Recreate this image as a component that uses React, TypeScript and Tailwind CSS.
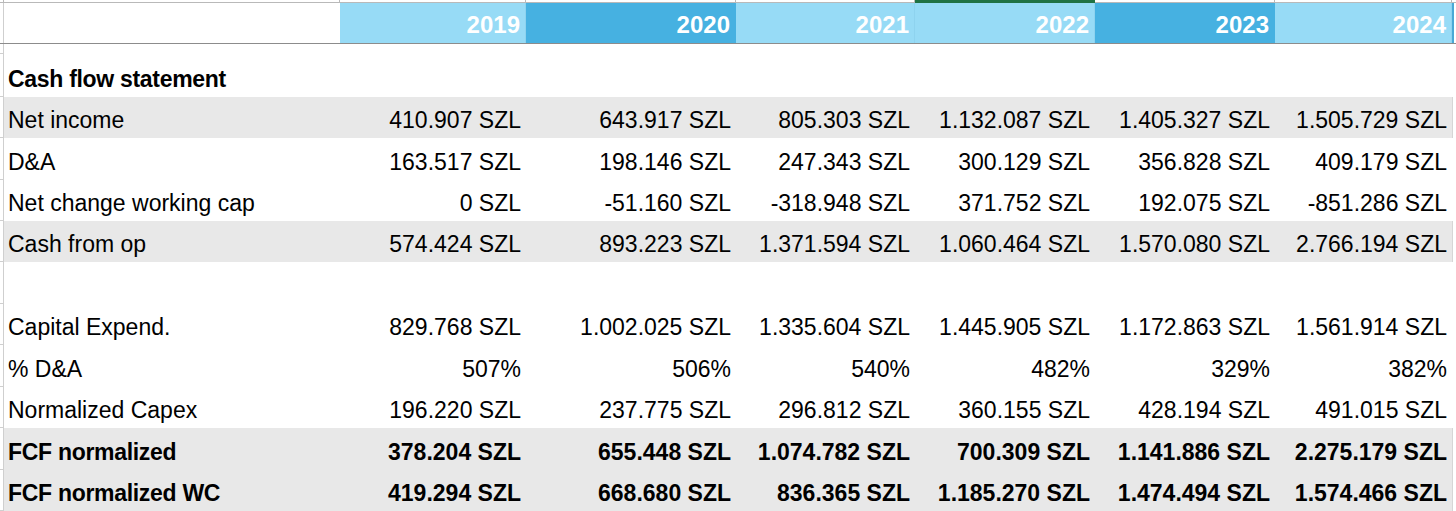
import * as React from "react";

// column widths (px) after the 4px left gutter: label, 2019..2024
const cols = [336, 186, 210, 179, 180, 180, 177];
const years = ["2019", "2020", "2021", "2022", "2023", "2024"];
const dark = [false, true, false, false, true, false];

type Row = {
  label: string;
  values?: string[];
  shade?: boolean;
  bold?: boolean;
  h: number;
};

const rows: Row[] = [
  { label: "Cash flow statement", bold: true, h: 43 },
  { label: "Net income", shade: true, h: 41, values: ["410.907 SZL", "643.917 SZL", "805.303 SZL", "1.132.087 SZL", "1.405.327 SZL", "1.505.729 SZL"] },
  { label: "D&A", h: 42, values: ["163.517 SZL", "198.146 SZL", "247.343 SZL", "300.129 SZL", "356.828 SZL", "409.179 SZL"] },
  { label: "Net change working cap", h: 41, values: ["0 SZL", "-51.160 SZL", "-318.948 SZL", "371.752 SZL", "192.075 SZL", "-851.286 SZL"] },
  { label: "Cash from op", shade: true, h: 41, values: ["574.424 SZL", "893.223 SZL", "1.371.594 SZL", "1.060.464 SZL", "1.570.080 SZL", "2.766.194 SZL"] },
  { label: "", h: 42 },
  { label: "Capital Expend.", h: 41, values: ["829.768 SZL", "1.002.025 SZL", "1.335.604 SZL", "1.445.905 SZL", "1.172.863 SZL", "1.561.914 SZL"] },
  { label: "% D&A", h: 42, values: ["507%", "506%", "540%", "482%", "329%", "382%"] },
  { label: "Normalized Capex", h: 41, values: ["196.220 SZL", "237.775 SZL", "296.812 SZL", "360.155 SZL", "428.194 SZL", "491.015 SZL"] },
  { label: "FCF normalized", shade: true, bold: true, h: 42, values: ["378.204 SZL", "655.448 SZL", "1.074.782 SZL", "700.309 SZL", "1.141.886 SZL", "2.275.179 SZL"] },
  { label: "FCF normalized WC", shade: true, bold: true, h: 41, values: ["419.294 SZL", "668.680 SZL", "836.365 SZL", "1.185.270 SZL", "1.474.494 SZL", "1.574.466 SZL"] },
];

function Gutter({ h }: { h: number }) {
  return <div className="w-[4px] shrink-0 border-r border-b border-[#cfcfcf] bg-white" style={{ height: h }} />;
}

export default function App() {
  return (
    <div className="w-[1456px] h-[511px] overflow-hidden bg-white text-black font-['Liberation_Sans',Arial,sans-serif] text-[23px]">
      {/* top edge: column header strip, 2022 selected */}
      <div className="flex h-[3px]">
        <div className="w-[4px] shrink-0 border-r border-b border-[#b9b9b9]" />
        {cols.map((w, i) => (
          <div
            key={i}
            style={{ width: w }}
            className={
              i === 4
                ? "shrink-0 bg-[#1f7244]"
                : "shrink-0 border-b border-r border-[#b9b9b9]"
            }
          />
        ))}
        <div className="flex-1 border-b border-[#b9b9b9]" />
      </div>

      {/* year header */}
      <div className="flex h-[41px] border-b border-[#8c8c8c]">
        <div className="w-[4px] shrink-0 border-r border-[#cfcfcf]" />
        <div style={{ width: cols[0] }} className="shrink-0" />
        {years.map((y, i) => (
          <div
            key={y}
            style={{ width: cols[i + 1] }}
            className={
              "shrink-0 flex items-end justify-end pr-[5px] pb-[6px] leading-none font-bold text-white text-[24px] border-r " +
              (dark[i] ? "bg-[#46b1e1] border-[#46b1e1]" : "bg-[#97dbf6] border-[#8ed3ef]")
            }
          >
            {y}
          </div>
        ))}
        <div className="w-[2px] shrink-0 bg-[#4aa9d6]" />
      </div>

      {/* spacer row */}
      <div className="flex h-[10px]">
        <Gutter h={10} />
      </div>

      {rows.map((r, ri) => (
        <div key={ri} className="flex" style={{ height: r.h }}>
          <Gutter h={r.h} />
          <div className={"flex " + (r.shade ? "bg-[#e8e8e8] border-r border-[#d6d6d6]" : "")}>
            <div
              style={{ width: cols[0] }}
              className={"shrink-0 flex items-end pl-[4px] pb-[6px] leading-none whitespace-nowrap " + (r.bold ? "font-bold tracking-[-0.3px]" : "")}
            >
              {r.label}
            </div>
            {cols.slice(1).map((w, i) => (
              <div
                key={i}
                style={{ width: w }}
                className={"shrink-0 flex items-end justify-end pr-[5px] pb-[6px] leading-none whitespace-nowrap " + (r.bold ? "font-bold" : "")}
              >
                {r.values ? r.values[i] : ""}
              </div>
            ))}
          </div>
        </div>
      ))}
    </div>
  );
}
